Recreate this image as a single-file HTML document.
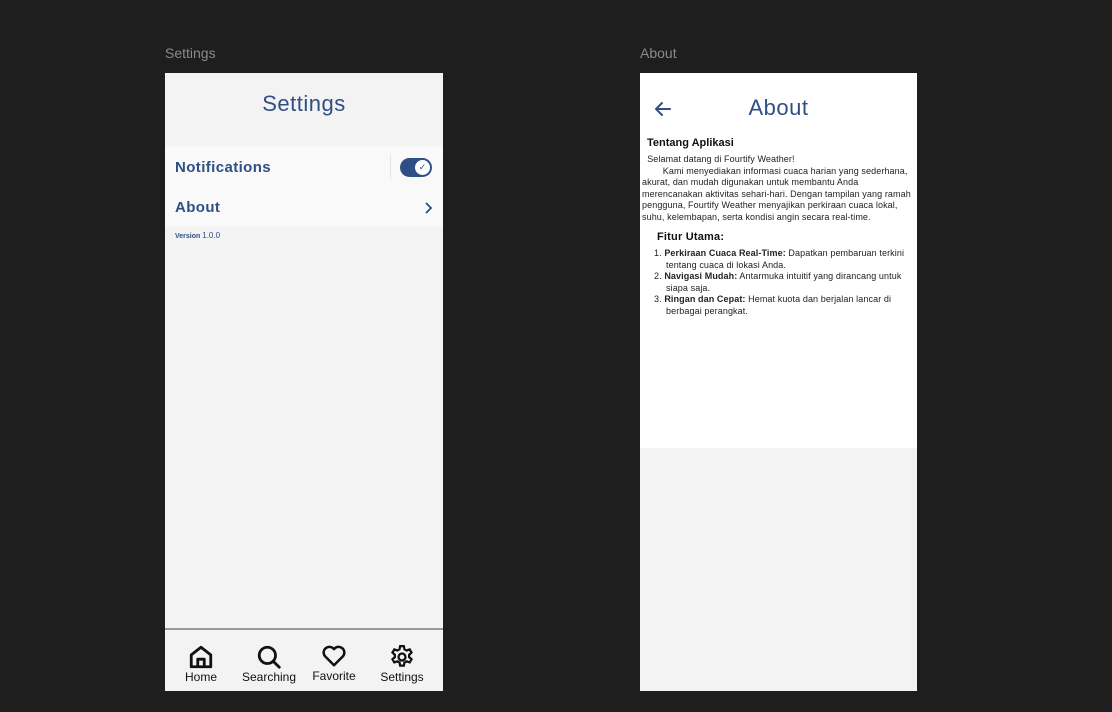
<!DOCTYPE html>
<html><head><style>
body{margin:0;width:1112px;height:712px;background:#1e1e1e;position:relative;overflow:hidden;font-family:"Liberation Sans",sans-serif}
.lbl{position:absolute;color:#8a8a8a;font-size:14px}
.f{position:absolute;top:73px;width:278px;height:618px;background:#f3f3f3;overflow:hidden}
.blue{color:#2f4f84}
.abs{position:absolute}
.nav{position:absolute;left:0;top:555px;width:278px;height:63px;border-top:2px solid #9a9a9a;background:#f3f3f3}
.ni{position:absolute;text-align:center;font-size:12px;color:#111;width:70px}
.ni svg{display:block;margin:0 auto}
.ab{font-size:9px;line-height:11.5px;color:#222;letter-spacing:0.1px}
</style></head><body>
<div class="lbl" style="left:165px;top:45px">Settings</div>
<div class="lbl" style="left:640px;top:45px">About</div>

<div class="f" style="left:165px">
 <div class="abs blue" style="left:0;width:278px;top:18px;text-align:center;font-size:22px;letter-spacing:0.5px">Settings</div>
 <div class="abs" style="left:0;top:73px;width:278px;height:80px;background:#f9f9f9"></div>
 <div class="abs blue" style="left:10px;top:86px;font-size:15px;font-weight:bold;letter-spacing:0.4px">Notifications</div>
 <div class="abs" style="left:225px;top:82px;width:1px;height:24px;background:#e2e2e2"></div>
 <div class="abs" style="left:235px;top:85px;width:32px;height:19px;border-radius:10px;background:#2f4f84"></div>
 <div class="abs" style="left:250px;top:87px;width:15px;height:15px;border-radius:8px;background:#fff;font-size:9px;text-align:center;line-height:15px;color:#2f4f84">✓</div>
 <div class="abs blue" style="left:10px;top:126px;font-size:15px;font-weight:bold;letter-spacing:0.4px">About</div>
 <svg class="abs" style="left:258px;top:128px" width="10" height="14" viewBox="0 0 10 14" fill="none" stroke="#2f4f84" stroke-width="1.8"><path d="M3 2l5 5-5 5"/></svg>
 <div class="abs blue" style="left:10px;top:158px;font-size:7px"><b>Version</b> <span style="font-size:8px">1.0.0</span></div>
 <div class="nav">
  <div class="ni" style="left:1px;top:14px"><svg width="26" height="26" viewBox="0 0 24 24" fill="none" stroke="#111" stroke-width="2.6" stroke-linejoin="round"><path d="M3 10L12 3l9 7v11H3z"/><path d="M9 21v-7h6v7"/></svg>Home</div>
  <div class="ni" style="left:69px;top:14px"><svg width="26" height="26" viewBox="0 0 24 24" fill="none" stroke="#111" stroke-width="2.6" stroke-linecap="round"><circle cx="10.5" cy="10.5" r="7.5"/><path d="M16 16l5.5 5.5"/></svg>Searching</div>
  <div class="ni" style="left:134px;top:13px"><svg width="28" height="26" viewBox="0 0 24 24" fill="none" stroke="#111" stroke-width="2.3" stroke-linejoin="round"><path d="M12 20.5L3.5 12a5 5 0 0 1 8.5-6.3 5 5 0 0 1 8.5 6.3z"/></svg>Favorite</div>
  <div class="ni" style="left:202px;top:14px"><svg width="28" height="26" viewBox="0 0 24 24" fill="none" stroke="#111" stroke-width="2.1"><circle cx="12" cy="12" r="3.2"/><path d="M10.3 2h3.4l.6 2.9 2 1.1 2.8-1 1.7 2.9-2.2 2v2.2l2.2 2-1.7 2.9-2.8-1-2 1.1-.6 2.9h-3.4l-.6-2.9-2-1.1-2.8 1-1.7-2.9 2.2-2v-2.2l-2.2-2 1.7-2.9 2.8 1 2-1.1z"/></svg>Settings</div>
 </div>
</div>

<div class="f" style="left:640px;width:277px">
 <div class="abs" style="left:0;top:0;width:277px;height:375px;background:#fff"></div>
 <svg class="abs" style="left:14px;top:28px" width="18" height="16" viewBox="0 0 18 16" fill="none" stroke="#2f4f84" stroke-width="2" stroke-linecap="round" stroke-linejoin="round"><path d="M16 8H2M8 2L2 8l6 6"/></svg>
 <div class="abs blue" style="left:0;width:277px;top:22px;text-align:center;font-size:22px;letter-spacing:0.5px">About</div>
 <div class="abs" style="left:7px;top:64px;font-size:11px;font-weight:bold;color:#111">Tentang Aplikasi</div>
 <div class="abs ab" style="left:2px;top:81px;width:274px">&nbsp;&nbsp;Selamat datang di Fourtify Weather!<br>&nbsp;&nbsp;&nbsp;&nbsp;&nbsp;&nbsp;&nbsp;&nbsp;Kami menyediakan informasi cuaca harian yang sederhana, akurat, dan mudah digunakan untuk membantu Anda merencanakan aktivitas sehari-hari. Dengan tampilan yang ramah pengguna, Fourtify Weather menyajikan perkiraan cuaca lokal, suhu, kelembapan, serta kondisi angin secara real-time.</div>
 <div class="abs" style="left:17px;top:158px;font-size:11px;color:#111;font-weight:bold;letter-spacing:0.2px">Fitur Utama:</div>
 <div class="abs ab" style="left:14px;top:175px;width:260px">
  <div style="padding-left:12px;text-indent:-12px">1. <b>Perkiraan Cuaca Real-Time:</b> Dapatkan pembaruan terkini tentang cuaca di lokasi Anda.</div>
  <div style="padding-left:12px;text-indent:-12px">2. <b>Navigasi Mudah:</b> Antarmuka intuitif yang dirancang untuk siapa saja.</div>
  <div style="padding-left:12px;text-indent:-12px">3. <b>Ringan dan Cepat:</b> Hemat kuota dan berjalan lancar di berbagai perangkat.</div>
 </div>
</div>
</body></html>
